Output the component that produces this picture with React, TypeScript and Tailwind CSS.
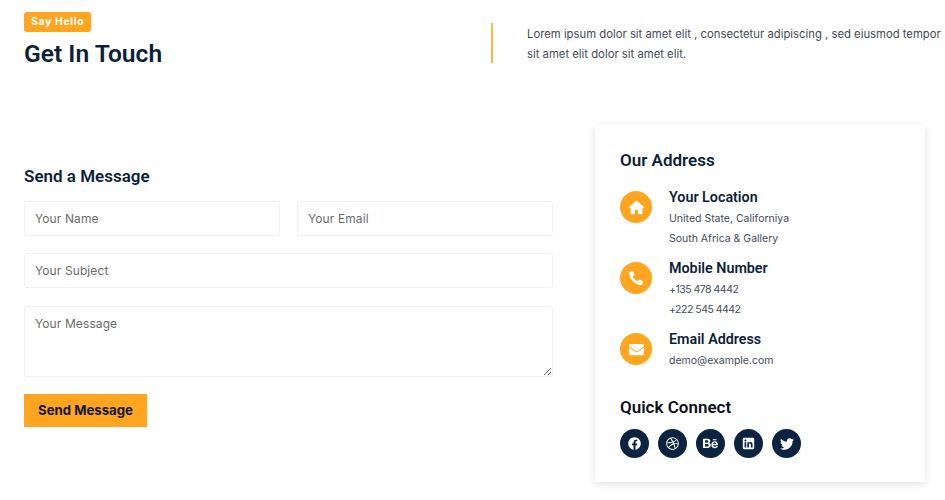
import React from "react";
import { FaEnvelope, FaFacebook, FaDribbble, FaBehance, FaLinkedin, FaTwitter, FaPhoneAlt } from "react-icons/fa";
import { FaHouse } from "react-icons/fa6";

const body = "font-['Inter',sans-serif]";
const head = "font-['Roboto',sans-serif]";
const field = `block w-full rounded-[3px] border border-[#f0f0f0] bg-white px-[10px] text-[12px] tracking-[0.1px] text-[#555] placeholder:text-[#6b6b6b] outline-none ${body}`;

function Contact({ icon, title, lines, tight }: { icon: React.ReactNode; title: string; lines: string[]; tight?: boolean }) {
  return (
    <div className="flex">
      <div className="mt-[4px] flex h-8 w-8 shrink-0 items-center justify-center rounded-full bg-[#ffa51f] text-[15px] text-white">{icon}</div>
      <div className="ml-[17px]">
        <h4 className={`${head} text-[14.3px] font-semibold leading-5 text-[#0b1f3a]`}>{title}</h4>
        <div className={`${body} mt-[2px] text-[10.5px] leading-5 text-[#444b58] ${tight ? "tracking-[-0.5px]" : ""}`}>
          {lines.map((l) => (
            <p key={l}>{l}</p>
          ))}
        </div>
      </div>
    </div>
  );
}

function Social({ children }: { children: React.ReactNode }) {
  return <div className="flex h-[29px] w-[29px] items-center justify-center rounded-full bg-[#0b2340] text-[13px] text-white">{children}</div>;
}

export default function App() {
  return (
    <div className="h-[500px] w-[945px] overflow-hidden bg-white">
      <header className="flex pl-6 pt-3">
        <div className="w-[467px] shrink-0">
          <span className={`${body} block h-5 w-fit rounded-[3px] bg-[#ffa51f] px-[7px] text-[10.5px] font-bold leading-5 tracking-[0.6px] text-white`}>Say Hello</span>
          <h1 className={`${head} mt-1 text-[24.6px] font-semibold leading-9 text-[#0b1f3a]`}>Get In Touch</h1>
        </div>
        <div className="mt-[11px] h-10 border-l-2 border-[#f5b748] pl-[34px]">
          <p className={`${body} mt-[1px] w-[416px] whitespace-nowrap text-[11.3px] leading-5 text-[#444b58]`}>
            Lorem ipsum dolor sit amet elit , consectetur adipiscing , sed eiusmod tempor
            <br />
            sit amet elit dolor sit amet elit.
          </p>
        </div>
      </header>

      <main className="mt-[53px] flex pl-6">
        <section className="mt-[39px] w-[529px]">
          <h3 className={`${head} text-[17px] font-semibold leading-6 text-[#0b1f3a]`}>Send a Message</h3>
          <div className="mt-[13px] flex gap-[17px]">
            <input className={`${field} h-[35px]`} placeholder="Your Name" />
            <input className={`${field} h-[35px]`} placeholder="Your Email" />
          </div>
          <input className={`${field} mt-[17px] h-[35px]`} placeholder="Your Subject" />
          <textarea className={`${field} mt-[18px] h-[71px] pt-[7px] leading-5`} placeholder="Your Message" />
          <button className={`${body} mt-[17px] block h-[33px] w-[123px] bg-[#ffa51f] text-[13.2px] font-bold text-[#111827]`}>Send Message</button>
        </section>

        <aside className="ml-[42px] h-[357px] w-[330px] bg-white px-[25px] pt-[25px] shadow-[0_2px_8px_rgba(0,0,0,0.12)]">
          <h3 className={`${head} text-[17px] font-semibold leading-5 text-[#0b1f3a]`}>Our Address</h3>
          <div className="mt-[17px] flex flex-col gap-[9px]">
            <Contact icon={<FaHouse />} title="Your Location" lines={["United State, Californiya", "South Africa & Gallery"]} />
            <Contact icon={<FaPhoneAlt className="text-[14px]" />} title="Mobile Number" lines={["+135 478 4442", "+222 545 4442"]} tight />
            <Contact icon={<FaEnvelope />} title="Email Address" lines={["demo@example.com"]} />
          </div>
          <h3 className={`${head} mt-[26px] text-[17px] font-semibold leading-5 text-[#0a0f1a]`}>Quick Connect</h3>
          <div className="mt-[12px] flex gap-[9px]">
            <Social><FaFacebook /></Social>
            <Social><FaDribbble /></Social>
            <Social><FaBehance className="text-[15px]" /></Social>
            <Social><FaLinkedin /></Social>
            <Social><FaTwitter className="text-[14px]" /></Social>
          </div>
        </aside>
      </main>
    </div>
  );
}
